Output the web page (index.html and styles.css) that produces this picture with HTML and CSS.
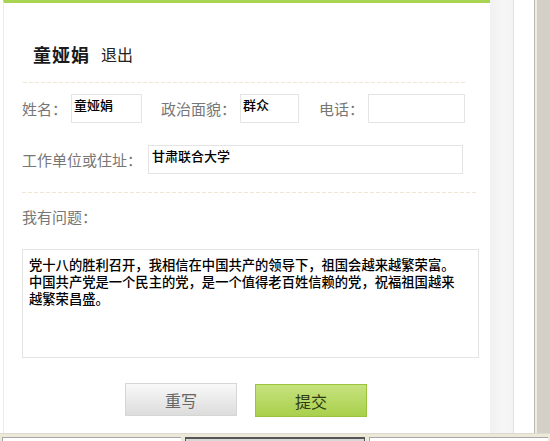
FILE: index.html
```html
<!DOCTYPE html>
<html lang="zh-CN">
<head>
<meta charset="utf-8">
<title>我有问题</title>
<link rel="stylesheet" href="styles.css">
</head>
<body>
<div class="window">
  <div class="main">
    <div class="viewport">
      <div class="gutter"></div>
      <div class="panel">
        <div class="title"><span class="user">童娅娟</span><a class="logout" href="#">退出</a></div>
        <div class="dash dash-short"></div>
        <div class="row row-first">
          <label class="label">姓名：</label>
          <input class="field f-name" type="text" value="童娅娟">
          <label class="label label-gap">政治面貌：</label>
          <input class="field f-party" type="text" value="群众">
          <label class="label label-gap">电话：</label>
          <input class="field f-phone" type="text" value="">
        </div>
        <div class="row row-second">
          <label class="label">工作单位或住址：</label>
          <input class="field f-addr" type="text" value="甘肃联合大学">
        </div>
        <div class="dash dash-long"></div>
        <div class="q-label">我有问题：</div>
        <textarea class="question">党十八的胜利召开，我相信在中国共产的领导下，祖国会越来越繁荣富。
中国共产党是一个民主的党，是一个值得老百姓信赖的党，祝福祖国越来
越繁荣昌盛。</textarea>
        <div class="actions">
          <button class="btn btn-reset" type="button">重写</button>
          <button class="btn btn-submit" type="button">提交</button>
        </div>
      </div>
      <div class="shade"></div>
      <div class="rule"></div>
      <div class="blank"></div>
    </div>
    <div class="scrollbar"></div>
  </div>
  <div class="statusbar">
    <div class="seg seg-1"></div>
    <div class="seg seg-2"></div>
    <div class="seg seg-3"></div>
  </div>
</div>
</body>
</html>
```
FILE: styles.css
```css
html, body {
  margin: 0;
  padding: 0;
  background: #ffffff;
}
body {
  font-family: "Noto Sans CJK SC", "Noto Sans", sans-serif;
  width: 550px;
  height: 441px;
  overflow: hidden;
}
.window {
  width: 550px;
  height: 441px;
  display: flex;
  flex-direction: column;
}
.main {
  height: 433px;
  display: flex;
}
.viewport {
  width: 534px;
  display: flex;
  background: #ffffff;
}
.gutter {
  width: 3px;
}
.panel {
  width: 487px;
  box-sizing: border-box;
  border-top: 3px solid #a9d452;
  border-left: 1px solid #ececec;
  padding: 39px 0 0 18px;
  background: #ffffff;
}
.shade {
  width: 23px;
  background: linear-gradient(to right, #f1f1f1, #f6f6f6 60%, #f3f3f3);
}
.rule {
  width: 1px;
  background: #e2e2e2;
}
.blank {
  width: 20px;
  background: #ffffff;
}
.scrollbar {
  width: 16px;
  box-sizing: border-box;
  border-left: 1px solid #bdb9b1;
  box-shadow: inset 2px 0 0 #efece6;
  background: #d4d0c8;
}
.statusbar {
  height: 8px;
  box-sizing: border-box;
  border-top: 1px solid #dedad2;
  background: #ece9d8;
  display: flex;
  padding: 3px 2px 0 2px;
  gap: 4px;
}
.seg {
  height: 5px;
  box-sizing: border-box;
}
.seg-1 {
  width: 179px;
  background: #ffffff;
  border-top: 1px solid #a7a6aa;
  border-left: 1px solid #a7a6aa;
}
.seg-2 {
  width: 180px;
  background: #d8d8d8;
  border-top: 2px solid #555555;
  border-left: 1px solid #555555;
  border-right: 1px solid #555555;
}
.seg-3 {
  width: 179px;
  background: #ffffff;
  border-top: 1px solid #a7a6aa;
  border-left: 1px solid #a7a6aa;
}

/* title */
.title {
  height: 24px;
  line-height: 24px;
  padding-left: 11px;
  display: flex;
  align-items: center;
}
.user {
  font-size: 18px;
  font-weight: bold;
  color: #1a1a1a;
  letter-spacing: 1px;
}
.logout {
  margin-left: 11px;
  font-size: 16px;
  color: #222222;
  text-decoration: none;
}

/* dashed separators */
.dash {
  height: 1px;
  background: repeating-linear-gradient(to right, #efe6d3 0 4px, transparent 4px 6px);
}
.dash-short {
  margin: 16px 0 0 1px;
  width: 444px;
}
.dash-long {
  margin-top: 18px;
  width: 456px;
}

/* form rows */
.row {
  display: flex;
  align-items: center;
  height: 29px;
}
.row-first {
  margin-top: 11px;
}
.row-second {
  margin-top: 22px;
}
.label {
  font-size: 15px;
  color: #777777;
  line-height: 20px;
  margin-right: 4px;
  white-space: nowrap;
}
.label-gap {
  margin-left: 19px;
}
.f-party + .label-gap {
  margin-left: 20px;
}
.field {
  box-sizing: border-box;
  height: 29px;
  margin: 0;
  border: 1px solid #e4e4e4;
  background: #ffffff;
  padding: 2px 2px 10px 2px;
  font-family: "Noto Sans CJK SC", sans-serif;
  font-size: 13px;
  font-weight: 500;
  line-height: 15px;
  color: #000000;
  outline: none;
}
.f-name {
  width: 71px;
}
.f-party {
  width: 59px;
}
.f-phone {
  width: 97px;
}
.f-addr {
  width: 315px;
  margin-left: 2px;
  padding-left: 3px;
}

/* question */
.q-label {
  margin-top: 13px;
  font-size: 15px;
  line-height: 22px;
  color: #777777;
}
.question {
  display: block;
  margin: 21px 0 0 0;
  width: 457px;
  height: 109px;
  box-sizing: border-box;
  border: 1px solid #e4e4e4;
  padding: 6px 4px 4px 6px;
  font-family: "Noto Sans CJK SC", sans-serif;
  font-size: 13.3px;
  font-weight: 500;
  line-height: 17px;
  color: #000000;
  resize: none;
  overflow: hidden;
  white-space: pre;
  outline: none;
}

/* buttons */
.actions {
  margin-top: 25px;
  padding-left: 103px;
  display: flex;
  align-items: flex-start;
  gap: 18px;
}
.btn {
  width: 112px;
  height: 33px;
  box-sizing: border-box;
  font-family: "Noto Sans CJK SC", sans-serif;
  font-size: 16px;
  padding: 0;
  cursor: pointer;
}
.btn-reset {
  border: 1px solid #d6d6d6;
  background: linear-gradient(to bottom, #f9f9f9, #dcdcdc);
  color: #666666;
}
.btn-submit {
  margin-top: 1px;
  border: 1px solid #99c43c;
  background: linear-gradient(to bottom, #c6e27e, #a9d04c);
  color: #2f3a14;
}
```
